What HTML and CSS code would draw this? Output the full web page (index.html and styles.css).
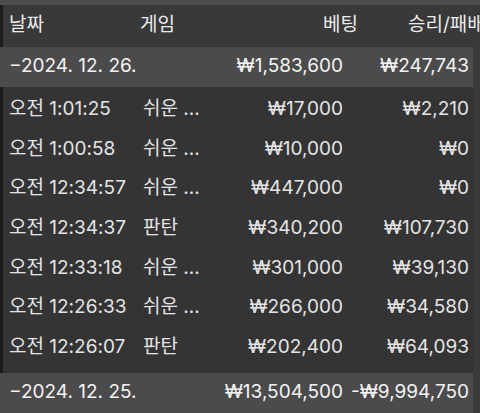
FILE: index.html
```html
<!DOCTYPE html>
<html lang="ko">
<head>
<meta charset="utf-8">
<link rel="stylesheet" href="styles.css">
</head>
<body>
<div class="panel">
  <div class="topstrip"></div>
  <div class="header">
    <div class="h-date">날짜</div>
    <div class="h-game">게임</div>
    <div class="h-bet">베팅</div>
    <div class="h-win">승리/패배</div>
  </div>
  <div class="group">
    <div class="group-row">
      <div class="c-date">−2024. 12. 26.</div>
      <div class="c-game"></div>
      <div class="c-bet">₩1,583,600</div>
      <div class="c-win">₩247,743</div>
    </div>
  </div>
  <div class="rows">
    <div class="row"><div class="c-date">오전 1:01:25</div><div class="c-game">쉬운 ...</div><div class="c-bet">₩17,000</div><div class="c-win">₩2,210</div></div>
    <div class="row"><div class="c-date">오전 1:00:58</div><div class="c-game">쉬운 ...</div><div class="c-bet">₩10,000</div><div class="c-win">₩0</div></div>
    <div class="row"><div class="c-date">오전 12:34:57</div><div class="c-game">쉬운 ...</div><div class="c-bet">₩447,000</div><div class="c-win">₩0</div></div>
    <div class="row"><div class="c-date">오전 12:34:37</div><div class="c-game">판탄</div><div class="c-bet">₩340,200</div><div class="c-win">₩107,730</div></div>
    <div class="row"><div class="c-date">오전 12:33:18</div><div class="c-game">쉬운 ...</div><div class="c-bet">₩301,000</div><div class="c-win">₩39,130</div></div>
    <div class="row"><div class="c-date">오전 12:26:33</div><div class="c-game">쉬운 ...</div><div class="c-bet">₩266,000</div><div class="c-win">₩34,580</div></div>
    <div class="row"><div class="c-date">오전 12:26:07</div><div class="c-game">판탄</div><div class="c-bet">₩202,400</div><div class="c-win">₩64,093</div></div>
  </div>
  <div class="group">
    <div class="group-row">
      <div class="c-date">−2024. 12. 25.</div>
      <div class="c-game"></div>
      <div class="c-bet">₩13,504,500</div>
      <div class="c-win">-₩9,994,750</div>
    </div>
  </div>
</div>
</body>
</html>
```

FILE: styles.css
```css
* { box-sizing: border-box; margin: 0; padding: 0; }
html, body {
  width: 480px;
  height: 413px;
  overflow: hidden;
  background: #353536;
}
body {
  font-family: "Inter", "Noto Sans CJK KR", sans-serif;
  font-size: 19px;
  line-height: 23px;
  color: #e6e6e6;
}
.panel {
  display: flex;
  flex-direction: column;
  width: 480px;
  height: 413px;
}
.topstrip {
  height: 5px;
  background: #4d4d4e;
}
.header {
  height: 43px;
  display: grid;
  grid-template-columns: 131px 98px 120px 1fr;
  align-items: center;
  padding: 0 0 4px 6px;
  border-left: 3px solid #1c1c1e;
  background: #39393a;
  color: #ececec;
  white-space: nowrap;
  overflow: hidden;
}
.h-bet { text-align: right; }
.h-win { padding-left: 50px; overflow: visible; }

.group {
  background: #3a3a3b;
  padding-right: 7px;
}
.group-row {
  height: 40px;
  display: grid;
  grid-template-columns: 134px 80px 120px 126px;
  align-items: center;
  padding: 0 0 4px 9px;
  background: #4b4b4c;
  color: #f3f3f3;
  white-space: nowrap;
}
.group:first-of-type .group-row { height: 39px; }

.rows {
  padding: 4px 7px 4px 0;
  border-left: 3px solid #1c1c1e;
  background: linear-gradient(to right, #343435 0, #343435 470px, #39393a 470px);
  flex: 1;
}
.row {
  height: 39.7px;
  display: grid;
  grid-template-columns: 134px 80px 120px 126px;
  align-items: center;
  padding: 0 0 5px 6px;
  color: #e4e4e4;
  white-space: nowrap;
}
.c-bet, .c-win { text-align: right; }
.c-game { overflow: hidden; }
```
